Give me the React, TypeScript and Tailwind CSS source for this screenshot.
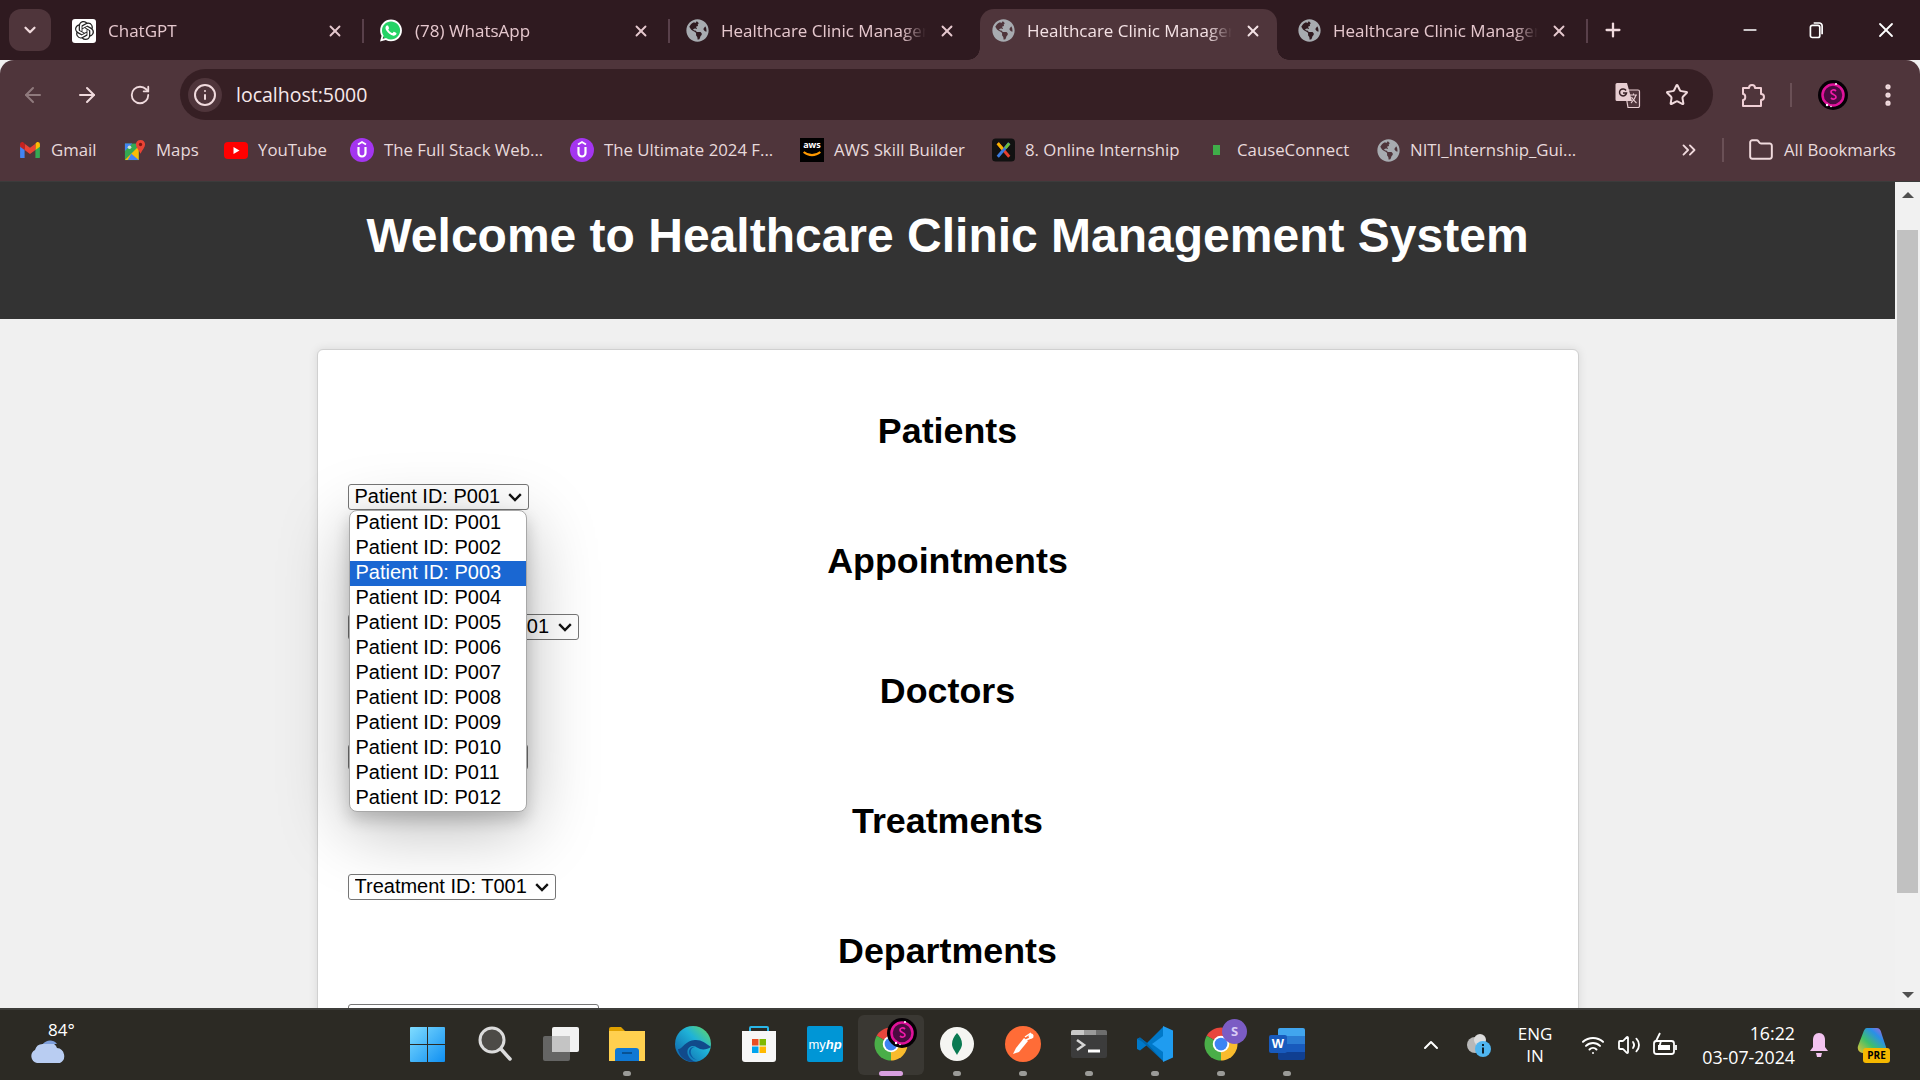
import { ArrowLeft, ArrowRight, RotateCw, Info, Star, EllipsisVertical, ChevronsRight, ChevronDown, ChevronUp, X, Plus, Minus, Folder, Wifi, Volume2 } from "lucide-react";
import { FaGlobeAmericas, FaWhatsapp } from "react-icons/fa";
import { SiOpenai } from "react-icons/si";

const Globe = () => <FaGlobeAmericas className="w-[23px] h-[23px] text-[#a7abb0] shrink-0" />;

function Gmail() {
  return (
    <svg viewBox="0 0 24 20" className="w-[22px] h-[18px]">
      <path d="M1 4v14a1 1 0 0 0 1 1h4V9z" fill="#4285f4" />
      <path d="M23 4v14a1 1 0 0 1-1 1h-4V9z" fill="#34a853" />
      <path d="M18 3v7l5-3.5V3.500C23 1.500 20.700.5 19.200 1.600z" fill="#fbbc04" />
      <path d="M6 10V3l6 4.500L18 3v7l-6 4.500z" fill="#ea4335" />
      <path d="M1 3.500v3L6 10V3L4.800 1.600C3.300.5 1 1.500 1 3.500z" fill="#c5221f" />
    </svg>
  );
}

function Maps() {
  return (
    <svg viewBox="0 0 24 24" className="w-[22px] h-[24px]">
      <path d="M1 5h15v18H1z" fill="#34a853" />
      <path d="M1 5h8L1 13z" fill="#4285f4" />
      <path d="M1 23l15-15v15z" fill="#fbbc04" />
      <path d="M8 16l8 7H4z" fill="#4285f4" />
      <circle cx="6" cy="9" r="2" fill="#cfe3d0" />
      <path d="M18 1c3 0 5 2 5 5 0 3-3 6-5 10-2-4-5-7-5-10 0-3 2-5 5-5z" fill="#ea4335" />
      <circle cx="18" cy="6" r="1.800" fill="#7d1410" />
    </svg>
  );
}

function YouTube() {
  return (
    <svg viewBox="0 0 24 17" className="w-[24px] h-[17px]">
      <rect width="24" height="17" rx="4" fill="#f00" />
      <path d="M9.500 5l6 3.500-6 3.500z" fill="#fff" />
    </svg>
  );
}

function Udemy() {
  return (
    <svg viewBox="0 0 24 24" className="w-[24px] h-[24px]">
      <circle cx="12" cy="12" r="12" fill="#a435f0" />
      <path d="M8 6.500L12 4l4 2.500" fill="none" stroke="#fff" strokeWidth="1.800" />
      <path d="M8.500 9v6a3.500 3.500 0 0 0 7 0V9" fill="none" stroke="#fff" strokeWidth="2.200" />
    </svg>
  );
}

function Aws() {
  return (
    <span className="relative w-[24px] h-[24px] bg-black flex flex-col items-center text-white text-[9px] font-bold leading-[13px]">
      aws
      <svg viewBox="0 0 24 8" className="w-[20px] h-[7px]">
        <path d="M2 1c6 5 14 5 20 0" fill="none" stroke="#f90" strokeWidth="2.500" />
      </svg>
    </span>
  );
}

function Joomla() {
  return (
    <svg viewBox="0 0 24 24" className="w-[23px] h-[24px]">
      <rect width="24" height="24" rx="4" fill="#111" />
      <path d="M6 5l12 14" stroke="#e8402f" strokeWidth="3" />
      <path d="M18 5L6 19" stroke="#3a7be0" strokeWidth="3" />
      <path d="M6 5l5 6" stroke="#f4b400" strokeWidth="3" />
      <path d="M18 5l-4 5" stroke="#6fbf3a" strokeWidth="3" />
    </svg>
  );
}

function Translate() {
  return (
    <svg viewBox="0 0 26 26" className="w-[26px] h-[26px]">
      <path d="M10 8h13a1.500 1.500 0 0 1 1.500 1.500V24a1.500 1.500 0 0 1-1.500 1.500H13z" fill="#4f353b" stroke="#e7cdd1" strokeWidth="1.200" />
      <path d="M2 1h10l5 18H2a1.500 1.500 0 0 1-1.500-1.500v-15A1.500 1.500 0 0 1 2 1z" fill="#e7cdd1" />
      <path d="M11 8.500a3.500 3.500 0 1 0 .5 2.500H8" fill="none" stroke="#361f24" strokeWidth="1.500" />
      <path d="M15 13h7M18.500 11.500v2M21 13c-1 4-3 6-5 8M16.500 15c1 2 3 4 5 6" fill="none" stroke="#e7cdd1" strokeWidth="1.100" />
    </svg>
  );
}

function Puzzle() {
  return (
    <svg viewBox="0 0 26 26" className="w-[26px] h-[26px]" fill="none" stroke="#f0cfd5" strokeWidth="2" strokeLinejoin="round">
      <path d="M3 6h6c0-4 6-4 6 0h6v6c4 0 4 6 0 6v6H3v-6c3 0 3-6 0-6z" />
    </svg>
  );
}

function Profile() {
  return (
    <svg viewBox="0 0 30 30" className="w-[30px] h-[30px]">
      <circle cx="15" cy="15" r="15" fill="#050005" />
      <circle cx="15" cy="15" r="10.500" fill="#4a0b40" stroke="#e0129a" strokeWidth="2.500" />
      <path d="M18 11c-2-2-5-1-5 1 0 3 5 2 5 5 0 2-3 3-5 1" fill="none" stroke="#f01aa8" strokeWidth="1.800" />
      <circle cx="18" cy="4" r="1" fill="#fff" />
      <circle cx="9" cy="25" r="1.200" fill="#fff" />
      <circle cx="13" cy="26.500" r="0.800" fill="#fff" />
    </svg>
  );
}

function Chrome() {
  return (
    <svg viewBox="0 0 48 48" className="w-[36px] h-[36px]">
      <path d="M24 24L4.950 13A22 22 0 0 1 43.050 13Z" fill="#e8453c" />
      <path d="M24 24L43.050 13A22 22 0 0 1 24 46Z" fill="#f9bb2d" />
      <path d="M24 24L24 46A22 22 0 0 1 4.950 13Z" fill="#4aae48" />
      <circle cx="24" cy="24" r="11" fill="#fff" />
      <circle cx="24" cy="24" r="8.500" fill="#3d84f3" />
    </svg>
  );
}

const WinLogo = () => (
  <svg viewBox="0 0 35 35" className="w-[35px] h-[35px] mr-[4px]">
    <defs>
      <linearGradient id="win" x1="0" y1="0" x2="1" y2="1">
        <stop offset="0" stopColor="#7fdcff" />
        <stop offset="1" stopColor="#0f8ff2" />
      </linearGradient>
    </defs>
    <path d="M1 0h16v17H0V1a1 1 0 0 1 1-1zM18 0h16a1 1 0 0 1 1 1v16H18zM0 18h17v17H1a1 1 0 0 1-1-1zM18 18h17v16a1 1 0 0 1-1 1H18z" fill="url(#win)" />
  </svg>
);

const SearchIcon = () => (
  <svg viewBox="0 0 34 36" className="w-[34px] h-[36px]">
    <circle cx="14" cy="14" r="12" fill="#4d4b47" stroke="#dcdcdc" strokeWidth="3" />
    <path d="M23 23l9 10" stroke="#dcdcdc" strokeWidth="3.500" strokeLinecap="round" />
  </svg>
);

const TaskView = () => (
  <svg viewBox="0 0 36 34" className="w-[36px] h-[34px]">
    <rect x="9" y="0" width="27" height="25" rx="2" fill="#f2f2f2" />
    <rect x="0" y="9" width="27" height="25" rx="2" fill="#6b6b6b" fillOpacity="0.9" />
    <rect x="9" y="9" width="18" height="16" fill="#c4c4c4" />
  </svg>
);

const Explorer = () => (
  <svg viewBox="0 0 36 34" className="w-[36px] h-[34px]">
    <path d="M0 2a2 2 0 0 1 2-2h10l4 4H0z" fill="#e0a100" />
    <path d="M0 4h36v30H0z" fill="#ffd04f" />
    <path d="M6 34V24a3 3 0 0 1 3-3h18a3 3 0 0 1 3 3v10z" fill="#0f78d4" />
    <path d="M13 26h10" stroke="#07467f" strokeWidth="1.500" />
  </svg>
);

const Edge = () => (
  <svg viewBox="0 0 36 36" className="w-[36px] h-[36px]">
    <defs>
      <linearGradient id="edge" x1="0" y1="1" x2="1" y2="0">
        <stop offset="0" stopColor="#0c59a4" />
        <stop offset="0.6" stopColor="#1fb3d8" />
        <stop offset="1" stopColor="#6bdc5b" />
      </linearGradient>
    </defs>
    <circle cx="18" cy="18" r="18" fill="url(#edge)" />
    <path d="M36 21c-3 2-7 3-11 2-3-1-4-3-7-3-4 0-7 4-5 9 1 3 4 6 8 7-9 1-17-5-18-13 4 1 8-10 18-9 6 0 9 3 15 7z" fill="#114a8b" />
    <path d="M20 21c-3 0-5 3-4 7 1 3 3 5 6 6-5-1-8-5-8-8 0-3 3-6 6-5z" fill="#0c59a4" />
  </svg>
);

const Store = () => (
  <svg viewBox="0 0 36 36" className="w-[36px] h-[36px]">
    <path d="M9 6V2a1 1 0 0 1 1-1h16a1 1 0 0 1 1 1v4" fill="none" stroke="#29b6e8" strokeWidth="2" />
    <path d="M1 5h34v28a3 3 0 0 1-3 3H4a3 3 0 0 1-3-3z" fill="#f7f7f7" />
    <path d="M11 13h6.500v6.500H11z" fill="#ea4f25" />
    <path d="M18.500 13H25v6.500h-6.500z" fill="#7fb900" />
    <path d="M11 20.500h6.500V27H11z" fill="#00a4ef" />
    <path d="M18.500 20.500H25V27h-6.500z" fill="#ffb900" />
  </svg>
);

const MyHp = () => (
  <span className="w-[36px] h-[36px] bg-[#0096d6] rounded-[2px] flex items-center justify-center text-white text-[13px] leading-none font-['Liberation_Sans',sans-serif]">
    my<span className="font-bold italic">hp</span>
  </span>
);

const Mongo = () => (
  <svg viewBox="0 0 34 34" className="w-[34px] h-[34px]">
    <circle cx="17" cy="17" r="17" fill="#f5f5f2" />
    <path d="M17 6c3 3 5 7 5 11 0 4-3 7-5 11-2-4-5-7-5-11 0-4 2-8 5-11z" fill="#0a7a52" />
  </svg>
);

const Postman = () => (
  <svg viewBox="0 0 36 36" className="w-[36px] h-[36px]">
    <circle cx="18" cy="18" r="18" fill="#ff6c37" />
    <path d="M8 28l6-2 9-11-4-3-8 10z" fill="#fff" />
    <path d="M20 11l6-4M21 14l7-3" stroke="#fff" strokeWidth="1.500" />
    <circle cx="26" cy="10" r="2.500" fill="#fff" />
  </svg>
);

const Terminal = () => (
  <svg viewBox="0 0 36 28" className="w-[36px] h-[28px]">
    <rect width="36" height="28" rx="2" fill="#3c3c3c" />
    <path d="M0 2a2 2 0 0 1 2-2h11v5H0z" fill="#c9c9c9" />
    <path d="M13 0h12v5H13z" fill="#9a9a9a" />
    <path d="M25 0h9a2 2 0 0 1 2 2v3H25z" fill="#6e6e6e" />
    <path d="M6 10l7 5-7 5" fill="none" stroke="#d5d5d5" strokeWidth="2.500" />
    <path d="M17 21h12" stroke="#fff" strokeWidth="3" />
  </svg>
);

const VsCode = () => (
  <svg viewBox="0 0 36 36" className="w-[36px] h-[36px]">
    <path d="M26 1L10 17 3 11.500 0 13v10l3 1.500L10 19l16 16z" fill="#0078c8" />
    <path d="M26 35L5 15.500 0 13 3 11.500 10 17z" fill="#0065a9" />
    <path d="M26 0l10 4.500v27L26 36zM26 10L15 18l11 8z" fill="#1f9cf0" />
  </svg>
);

const Word = () => (
  <span className="relative w-[36px] h-[32px] block">
    <span className="absolute right-0 top-0 w-[27px] h-[32px] rounded-[2px] bg-[linear-gradient(#41a5ee_0_25%,#2b7cd3_25%_50%,#185abd_50%_75%,#103f91_75%)]" />
    <span className="absolute left-0 top-[7px] w-[18px] h-[18px] rounded-[2px] bg-[#185abd] text-white text-[13px] font-bold leading-[18px] text-center font-['Liberation_Sans',sans-serif]">W</span>
  </span>
);

const Copilot = () => (
  <span className="relative block w-[32px] h-[36px]">
    <svg viewBox="0 0 30 30" className="w-[30px] h-[30px]">
      <defs>
        <linearGradient id="cop" x1="0" y1="1" x2="1" y2="0">
          <stop offset="0" stopColor="#f2c230" />
          <stop offset="0.4" stopColor="#3fc06a" />
          <stop offset="0.7" stopColor="#2a8fe8" />
          <stop offset="1" stopColor="#d05ad8" />
        </linearGradient>
      </defs>
      <path d="M10 1h10c3 0 4 3 5 7l4 12c1 4-2 7-5 7h-6l-4-1H6c-4 0-6-4-5-7L6 6c1-3 2-5 4-5z" fill="url(#cop)" />
    </svg>
    <span className="absolute left-[6px] bottom-0 w-[27px] h-[15px] rounded-[3px] bg-[#f5b800] text-black text-[10px] font-bold leading-[15px] text-center">PRE</span>
  </span>
);

const bookmarks = [
  { label: "Gmail", icon: <Gmail />, w: "w-[105px]" },
  { label: "Maps", icon: <Maps />, w: "w-[100px]" },
  { label: "YouTube", icon: <YouTube />, w: "w-[126px]" },
  { label: "The Full Stack Web...", icon: <Udemy />, w: "w-[220px]" },
  { label: "The Ultimate 2024 F...", icon: <Udemy />, w: "w-[230px]" },
  { label: "AWS Skill Builder", icon: <Aws />, w: "w-[192px]" },
  { label: "8. Online Internship", icon: <Joomla />, w: "w-[219px]" },
  { label: "CauseConnect", icon: <span className="w-[7px] h-[10px] bg-[#3fae49] ml-[2px] mr-[7px] block" />, w: "w-[166px]" },
  { label: "NITI_Internship_Gui...", icon: <Globe />, w: "w-[301px]" },
];

const tabs = [
  { title: "ChatGPT", kind: "gpt", pad: "pl-[12px]" },
  { title: "(78) WhatsApp", kind: "wa", pad: "pl-[13px]" },
  { title: "Healthcare Clinic Management System", kind: "globe", pad: "pl-[14px]" },
  { title: "Healthcare Clinic Management System", kind: "globe", pad: "pl-[14px]", active: true },
  { title: "Healthcare Clinic Management System", kind: "globe", pad: "pl-[14px]" },
];

function TabIcon({ kind }: { kind: string }) {
  if (kind === "gpt")
    return (
      <span className="w-[24px] h-[24px] rounded-[3px] bg-white flex items-center justify-center shrink-0">
        <SiOpenai className="w-[19px] h-[19px] text-[#222]" />
      </span>
    );
  if (kind === "wa")
    return (
      <span className="relative w-[24px] h-[24px] flex items-center justify-center shrink-0">
        <span className="absolute w-[20px] h-[20px] rounded-full bg-[#25d366]" />
        <FaWhatsapp className="relative w-[25px] h-[25px] text-white" />
      </span>
    );
  return <Globe />;
}

const dockIcons = [
  { icon: <WinLogo /> },
  { icon: <SearchIcon /> },
  { icon: <TaskView /> },
  { icon: <Explorer />, dot: true },
  { icon: <Edge /> },
  { icon: <Store /> },
  { icon: <MyHp /> },
  {
    icon: (
      <span className="relative block">
        <Chrome />
        <span className="absolute -right-[8px] -top-[8px]"><Profile /></span>
      </span>
    ),
    active: true,
  },
  { icon: <Mongo />, dot: true },
  { icon: <Postman />, dot: true },
  { icon: <Terminal />, dot: true },
  { icon: <VsCode />, dot: true },
  {
    icon: (
      <span className="relative block">
        <Chrome />
        <span className="absolute -right-[8px] -top-[7px] w-[25px] h-[25px] rounded-full bg-[#7b5cc4] text-[#d9ccf5] text-[13px] font-bold leading-[25px] text-center">S</span>
      </span>
    ),
    dot: true,
  },
  { icon: <Word />, dot: true },
];

const patientIds = ["P001", "P002", "P003", "P004", "P005", "P006", "P007", "P008", "P009", "P010", "P011", "P012"];

function IdSelect({ width, options }: { width: string; options: string[] }) {
  return (
    <div className={`relative h-[26px] ${width}`}>
      <select className="appearance-none block w-full h-full pl-[6px] pb-[3px] border border-[#767676] rounded-[3px] bg-white text-black text-[20px] leading-[20px]">
        {options.map((o) => <option key={o}>{o}</option>)}
      </select>
      <svg viewBox="0 0 14 9" className="absolute right-[7px] top-[9px] w-[14px] h-[9px] pointer-events-none" fill="none" stroke="#111" strokeWidth="2.400">
        <path d="M1.200 1.200L7 7l5.800-5.800" />
      </svg>
    </div>
  );
}

const h2Class = "text-[35.8px] leading-[42px] font-bold text-center mb-[32px]";

export default function App() {
  return (
    <div className="w-[1920px] h-[1080px] overflow-hidden flex flex-col bg-[#f0f0f0] font-['Open_Sans','Noto_Sans',sans-serif]">
      {/* Tab strip */}
      <div className="h-[60px] shrink-0 bg-[#2f1a20] flex items-start pl-[9px] pt-[9px] text-[17px] text-[#e6c8ce]">
        <div className="w-[42px] h-[42px] rounded-[12px] bg-[#4f353b] flex items-center justify-center">
          <ChevronDown className="w-[18px] h-[18px] text-[#f0dadd]" strokeWidth={3} />
        </div>
        <div className="ml-[9px] flex">
          {tabs.map((tab, i) => (
            <div
              key={i}
              className={`relative w-[306px] h-[51px] ${tab.pad} pr-[22px] pb-[8px] flex items-center ${tab.active ? "text-[#f4e2e5] z-10" : ""}`}
            >
              {tab.active && (
                <span className="absolute -z-10 left-[2px] right-[7px] top-0 bottom-0 bg-[#4f353b] rounded-t-[14px]">
                  <span className="absolute -left-[12px] bottom-0 w-[12px] h-[12px] bg-[radial-gradient(circle_at_0_0,transparent_11.5px,#4f353b_12px)]" />
                  <span className="absolute -right-[12px] bottom-0 w-[12px] h-[12px] bg-[radial-gradient(circle_at_100%_0,transparent_11.5px,#4f353b_12px)]" />
                </span>
              )}
              <TabIcon kind={tab.kind} />
              <span className="ml-[12px] flex-1 whitespace-nowrap overflow-hidden [mask-image:linear-gradient(90deg,#000_88%,transparent)]">{tab.title}</span>
              <X className="ml-[12px] w-[18px] h-[18px] shrink-0" strokeWidth={2.500} />
              {i !== 2 && !tab.active && (
                <span className="absolute right-[2px] top-[10px] w-[2px] h-[24px] bg-[#59404a]" />
              )}
            </div>
          ))}
        </div>
        <Plus className="ml-[12px] mt-[10px] w-[22px] h-[22px] text-[#f0dadd]" strokeWidth={2.500} />
        <div className="ml-auto flex items-center h-[42px] text-white">
          <Minus className="w-[20px] h-[20px] mr-[49px]" strokeWidth={2} />
          <svg viewBox="0 0 16 18" className="w-[15px] h-[18px] mr-[50px]" fill="none" stroke="#fff" strokeWidth="1.800">
            <rect x="1.500" y="4" width="10" height="13" rx="2" />
            <path d="M5 1.500h6a3 3 0 0 1 3 3v9" />
          </svg>
          <X className="w-[24px] h-[24px] mr-[22px]" strokeWidth={1.800} />
        </div>
      </div>

      {/* Toolbar */}
      <div className="h-[122px] shrink-0 bg-[#4f353b] rounded-t-[14px] border-b border-[#3b3b3b] text-[#f0dadd]">
        <div className="h-[69px] flex items-center pl-[21px]">
          <ArrowLeft className="w-[24px] h-[24px] text-[#8f7a7d]" strokeWidth={2} />
          <ArrowRight className="ml-[30px] w-[24px] h-[24px]" strokeWidth={2} />
          <RotateCw className="ml-[30px] w-[22px] h-[22px]" strokeWidth={2} />
          <div className="ml-[29px] w-[1533px] h-[51px] rounded-full bg-[#361f24] flex items-center pl-[8px] pr-[24px]">
            <span className="w-[34px] h-[34px] rounded-full bg-[#4f353b] flex items-center justify-center">
              <Info className="w-[24px] h-[24px]" strokeWidth={2} />
            </span>
            <span className="ml-[14px] text-[19.5px] text-[#f6e9eb]">localhost:5000</span>
            <span className="ml-auto"><Translate /></span>
            <Star className="ml-[24px] w-[24px] h-[24px]" strokeWidth={2} />
          </div>
          <span className="ml-[27px]"><Puzzle /></span>
          <span className="ml-[24px] w-[2px] h-[24px] bg-[#6a5056]" />
          <span className="ml-[26px]"><Profile /></span>
          <EllipsisVertical className="ml-[26px] w-[28px] h-[28px]" strokeWidth={2.500} />
        </div>
        <div className="h-[42px] flex items-center pl-[19px] text-[16.8px] text-[#e8dadc]">
          {bookmarks.map((b) => (
            <div key={b.label} className={`flex items-center gap-[10px] shrink-0 ${b.w}`}>
              {b.icon}
              <span className="whitespace-nowrap">{b.label}</span>
            </div>
          ))}
          <ChevronsRight className="w-[22px] h-[22px] text-[#f0dadd]" strokeWidth={2} />
          <span className="ml-[22px] w-[2px] h-[24px] bg-[#6a5056]" />
          <Folder className="ml-[24px] w-[26px] h-[26px] text-[#f0dadd]" strokeWidth={1.800} />
          <span className="ml-[10px] whitespace-nowrap">All Bookmarks</span>
        </div>
      </div>

      {/* Page + scrollbar */}
      <div className="flex-1 min-h-0 flex">
        <main className="flex-1 min-w-0 overflow-hidden font-['Liberation_Sans',Arial,sans-serif] text-black">
          <header className="h-[137px] bg-[#333333] pt-[26px] text-center">
            <h1 className="text-[48px] leading-[55px] font-bold text-white">Welcome to Healthcare Clinic Management System</h1>
          </header>
          <div className="mt-[30px] mx-auto w-[1262px] bg-white border border-[#d0d0d0] rounded-[6px] shadow-[0_0_10px_rgba(0,0,0,0.1)] pt-[60px] px-[30px] pb-[40px]">
            <section className="relative mb-[30px]">
              <h2 className={h2Class}>Patients</h2>
              <IdSelect width="w-[181px]" options={patientIds.map((id) => `Patient ID: ${id}`)} />
              <div className="absolute z-10 left-[1px] top-[100px] w-[178px] bg-white border border-[#a8a8a8] rounded-[8px] overflow-hidden shadow-[0_8px_16px_rgba(0,0,0,0.18),0_16px_70px_rgba(0,0,0,0.28)] text-[20px] leading-[23px]">
                {patientIds.map((id) => (
                  <div key={id} className={`h-[25px] pl-[6px] ${id === "P003" ? "bg-[#1a67d2] text-white" : ""}`}>Patient ID: {id}</div>
                ))}
              </div>
            </section>
            <section className="mb-[30px]">
              <h2 className={h2Class}>Appointments</h2>
              <IdSelect width="w-[231px]" options={["Appointment ID: A001"]} />
            </section>
            <section className="mb-[30px]">
              <h2 className={h2Class}>Doctors</h2>
              <IdSelect width="w-[180px]" options={["Doctor ID: D001"]} />
            </section>
            <section className="mb-[30px]">
              <h2 className={h2Class}>Treatments</h2>
              <IdSelect width="w-[208px]" options={["Treatment ID: T001"]} />
            </section>
            <section>
              <h2 className={h2Class}>Departments</h2>
              <IdSelect width="w-[251px]" options={["Department ID: DP01"]} />
            </section>
          </div>
        </main>
        <aside className="w-[25px] shrink-0 bg-[#f1f1f1] flex flex-col items-center">
          <div className="h-[48px] flex items-start pt-[10px]">
            <span className="w-0 h-0 border-x-[6px] border-x-transparent border-b-[6px] border-b-[#505050]" />
          </div>
          <div className="w-[21px] h-[663px] bg-[#c1c1c1]" />
          <div className="flex-1 flex items-end pb-[10px]">
            <span className="w-0 h-0 border-x-[6px] border-x-transparent border-t-[6px] border-t-[#505050]" />
          </div>
        </aside>
      </div>

      {/* Windows taskbar */}
      <footer className="h-[72px] shrink-0 bg-[#2c2a24] border-t-2 border-[#3d3d3a] flex items-center text-white">
        <div className="relative w-[396px] h-full shrink-0">
          <span className="absolute left-[48px] top-[10px] text-[17px] leading-[20px]">84°</span>
          <svg viewBox="0 0 38 26" className="absolute left-[29px] top-[27px] w-[38px] h-[26px]">
            <path d="M8 26a7 7 0 0 1-2-13 8 8 0 0 1 8-6 9 9 0 0 1 14 4 8 8 0 0 1 3 15z" fill="#b9cdf2" />
            <path d="M14 7c3-4 10-5 14 0" fill="#7f9fda" />
          </svg>
        </div>
        {dockIcons.map((d, i) => (
          <div key={i} className={`relative w-[66px] h-[60px] shrink-0 flex items-center justify-center pb-[2px] ${d.active ? "rounded-[6px] bg-[#3a3833]" : ""}`}>
            {d.icon}
            {d.dot && <span className="absolute bottom-[-1px] w-[8px] h-[5px] rounded-full bg-[#9b9b98]" />}
            {d.active && <span className="absolute bottom-[-1px] w-[24px] h-[5px] rounded-full bg-[#d9a0e0]" />}
          </div>
        ))}
        <ChevronUp className="ml-[99px] w-[24px] h-[24px]" strokeWidth={2} />
        <svg viewBox="0 0 26 26" className="ml-[22px] w-[26px] h-[26px]">
          <circle cx="10" cy="13" r="8" fill="#b8b8b8" />
          <circle cx="15" cy="8" r="6" fill="#dcdcdc" />
          <circle cx="18" cy="17" r="8" fill="#4fb5f0" />
          <rect x="17" y="15.500" width="2" height="6" fill="#10202a" />
          <rect x="17" y="12" width="2" height="2" fill="#10202a" />
        </svg>
        <div className="ml-[22px] w-[44px] text-center text-[17px] leading-[22px]">
          <div>ENG</div>
          <div>IN</div>
        </div>
        <Wifi className="ml-[24px] w-[24px] h-[24px]" strokeWidth={2} />
        <Volume2 className="ml-[12px] w-[24px] h-[24px]" strokeWidth={1.800} />
        <svg viewBox="0 0 26 26" className="ml-[11px] w-[26px] h-[26px]" fill="none" stroke="#fff" strokeWidth="1.800">
          <rect x="2" y="9" width="20" height="13" rx="2.500" />
          <rect x="6" y="13" width="12" height="5" fill="#fff" stroke="none" />
          <path d="M24 13v5" />
          <path d="M8 1L4 9h5l-2 7" />
        </svg>
        <div className="ml-[1px] w-[116px] text-right text-[17.8px] leading-[24px]">
          <div>16:22</div>
          <div>03-07-2024</div>
        </div>
        <svg viewBox="0 0 20 26" className="ml-[14px] w-[20px] h-[26px]" fill="#f3c3f0">
          <path d="M10 1c4 0 6 3 6 7v7l3 4H1l3-4V8c0-4 2-7 6-7z" />
          <path d="M7 21h6l-1 4H8z" />
        </svg>
        <span className="ml-[28px]"><Copilot /></span>
      </footer>
    </div>
  );
}
